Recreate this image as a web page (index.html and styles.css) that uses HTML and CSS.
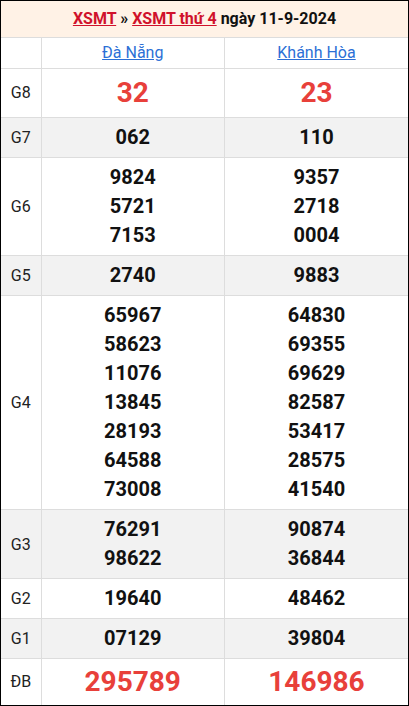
FILE: index.html
```html
<!DOCTYPE html>
<html lang="vi">
<head>
<meta charset="utf-8">
<title>XSMT thứ 4 ngày 11-9-2024</title>
<link rel="stylesheet" href="styles.css">
</head>
<body>
<div class="frame">
<table class="kq">
  <colgroup><col class="c-label"><col class="c-prov"><col class="c-prov"></colgroup>
  <thead>
    <tr class="title-row">
      <th colspan="3"><a href="#">XSMT</a> » <a href="#">XSMT thứ 4</a> ngày 11-9-2024</th>
    </tr>
    <tr class="prov-row">
      <th></th>
      <th><a href="#">Đà Nẵng</a></th>
      <th><a href="#">Khánh Hòa</a></th>
    </tr>
  </thead>
  <tbody>
    <tr class="big"><td class="lbl">G8</td><td>32</td><td>23</td></tr>
    <tr class="alt"><td class="lbl">G7</td><td>062</td><td>110</td></tr>
    <tr><td class="lbl">G6</td><td>9824<br>5721<br>7153</td><td>9357<br>2718<br>0004</td></tr>
    <tr class="alt"><td class="lbl">G5</td><td>2740</td><td>9883</td></tr>
    <tr><td class="lbl">G4</td><td>65967<br>58623<br>11076<br>13845<br>28193<br>64588<br>73008</td><td>64830<br>69355<br>69629<br>82587<br>53417<br>28575<br>41540</td></tr>
    <tr class="alt"><td class="lbl">G3</td><td>76291<br>98622</td><td>90874<br>36844</td></tr>
    <tr><td class="lbl">G2</td><td>19640</td><td>48462</td></tr>
    <tr class="alt"><td class="lbl">G1</td><td>07129</td><td>39804</td></tr>
    <tr class="big db"><td class="lbl">ĐB</td><td>295789</td><td>146986</td></tr>
  </tbody>
</table>
</div>
</body>
</html>
```
FILE: styles.css
```css
* { box-sizing: border-box; }
html, body { margin: 0; padding: 0; background: #fff; }
body { font-family: Roboto, "Noto Sans", Arial, sans-serif; color: #111; }
.frame {
  width: 409px;
  height: 706px;
  border: 1px solid #000;
  overflow: hidden;
}
.kq {
  width: 100%;
  border-collapse: collapse;
  border-style: hidden;
  table-layout: fixed;
}
.c-label { width: 40px; }
.kq th, .kq td {
  border: 1px solid #dddddd;
  text-align: center;
  padding: 0;
}
.title-row th {
  background: #fff2e6;
  font-size: 16px;
  font-weight: 700;
  line-height: 20px;
  padding: 8px 0 8px;
  color: #111;
}
.title-row a { color: #d0112b; text-decoration: underline; }
.prov-row th {
  font-weight: 400;
  font-size: 16px;
  line-height: 20px;
  padding: 5px 0 5px;
}
.prov-row a { color: #2b6fd6; text-decoration: underline; }
.kq td {
  font-size: 20px;
  font-weight: 700;
  line-height: 29px;
  padding: 5px 0;
  color: #111;
}
.kq td.lbl {
  font-size: 16px;
  font-weight: 400;
  color: #222;
}
.alt td { background: #f2f2f2; }
.big td {
  font-size: 28px;
  color: #e8403a;
  line-height: 38px;
}
.big td.lbl { font-size: 16px; color: #222; }
.db td { line-height: 36px; }
```
